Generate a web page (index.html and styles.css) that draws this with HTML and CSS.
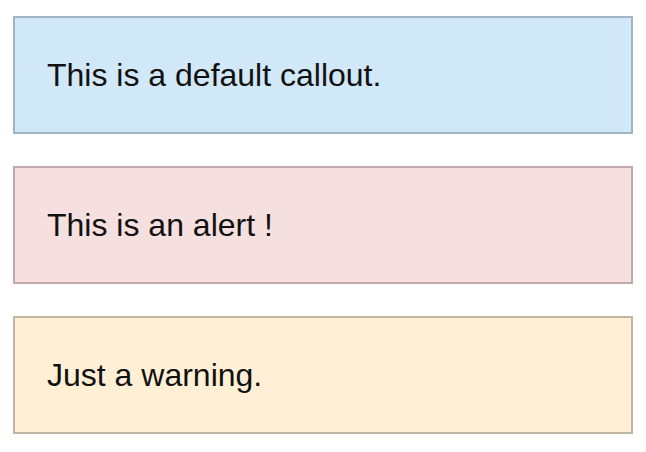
FILE: index.html
```html
<!DOCTYPE html>
<html>
<head>
<meta charset="utf-8">
<link rel="stylesheet" href="styles.css">
</head>
<body>
<div class="stack">
  <div class="callout callout-default">This is a default callout.</div>
  <div class="callout callout-alert">This is an alert !</div>
  <div class="callout callout-warning">Just a warning.</div>
</div>
</body>
</html>
```
FILE: styles.css
```css
html, body {
  margin: 0;
  background: #ffffff;
}
body {
  font-family: "Liberation Sans", Arial, sans-serif;
  color: #111111;
}
.stack {
  display: flex;
  flex-direction: column;
  gap: 32px;
  padding: 16px 13px;
}
.callout {
  border: 2px solid;
  padding: 38px 32px;
  font-size: 32px;
  line-height: 38px;
}
.callout-default {
  background: #d1e8f8;
  border-color: #a0b4c4;
}
.callout-alert {
  background: #f5dfdf;
  border-color: #c2aaaa;
}
.callout-warning {
  background: #fff0d5;
  border-color: #c0b5a0;
}
```
